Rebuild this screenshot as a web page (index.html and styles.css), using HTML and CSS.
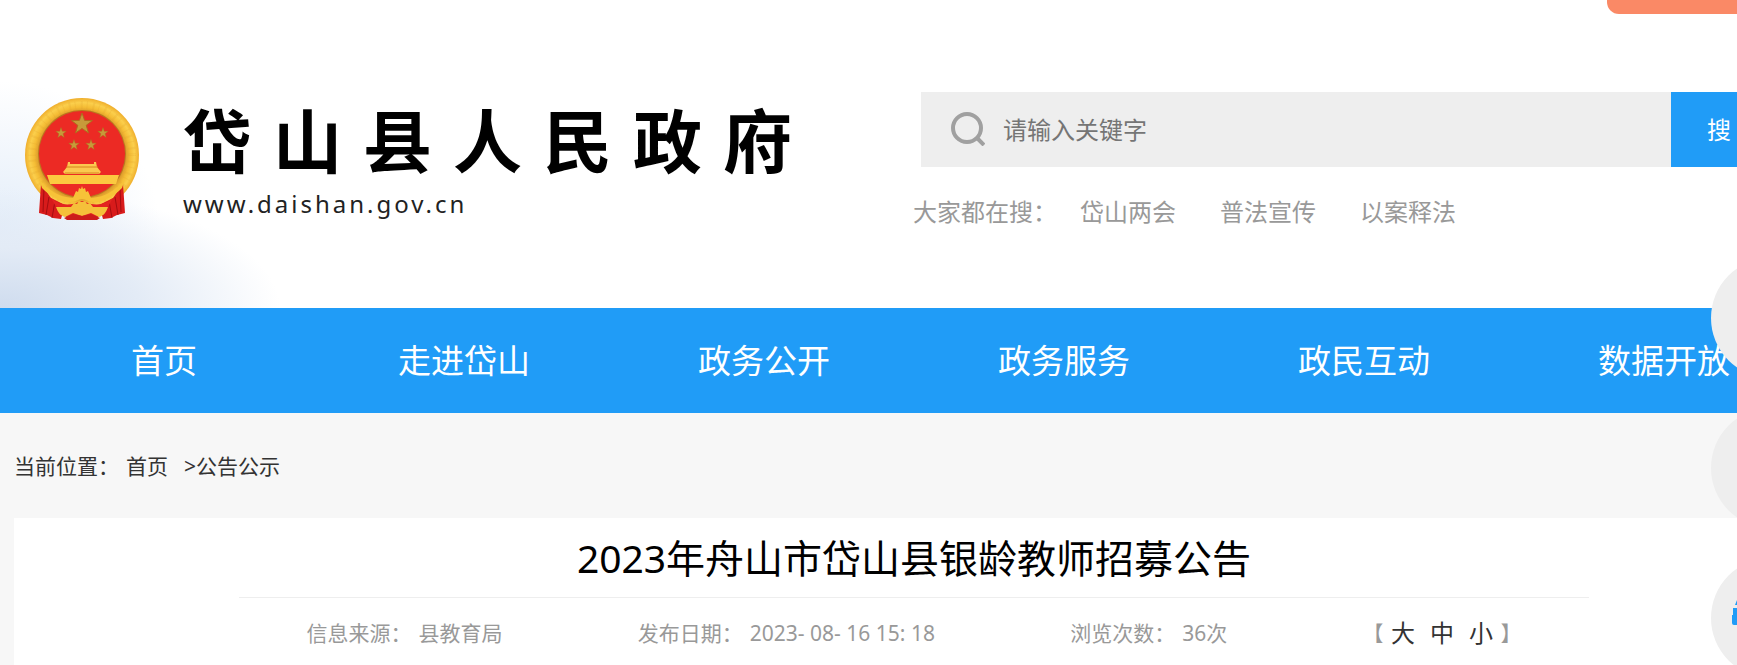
FILE: index.html
```html
<!doctype html>
<html lang="zh-CN">
<head>
	<meta charset="UTF-8">
	<meta name="viewport" content="width=device-width, initial-scale=1">
	<title>2023年舟山市岱山县银龄教师招募公告</title>
	<link rel="stylesheet" href="styles.css">
</head>
<body>
	<div class="header">
		<a href="#" class="topTab" aria-label="无障碍"></a>
		<div class="wrap head">
			<a href="#" class="logo">
				<svg class="emblem" viewBox="0 0 116 124" aria-hidden="true">
					<defs>
						<radialGradient id="gold" cx="50%" cy="50%" r="50%">
							<stop offset=".76" stop-color="#d9982a"/>
							<stop offset=".84" stop-color="#f5bd35"/>
							<stop offset=".92" stop-color="#fbcf4c"/>
							<stop offset="1" stop-color="#efae2c"/>
						</radialGradient>
						<path id="star" d="M0-10L2.4-3.2 9.5-3.1 3.8 1.2 5.9 8.1 0 4-5.9 8.1-3.8 1.2-9.5-3.1-2.4-3.2z"/>
					</defs>
					<circle cx="58" cy="58" r="57" fill="url(#gold)"/>
					<circle cx="58" cy="58" r="50" fill="none" stroke="#d9932a" stroke-width="8" stroke-dasharray="1 5 2 4" opacity=".15"/>
					<circle cx="58" cy="57" r="44" fill="#b9771f"/>
					<circle cx="58" cy="57" r="43" fill="#ec2a24"/>
					<g fill="#c79a3a" stroke="#a8701c" stroke-width=".8">
						<use href="#star" transform="translate(58 27) scale(1.1)"/>
						<use href="#star" transform="translate(37 36) scale(.55)"/>
						<use href="#star" transform="translate(79 36) scale(.55)"/>
						<use href="#star" transform="translate(50 48) scale(.55)"/>
						<use href="#star" transform="translate(67 48) scale(.55)"/>
					</g>
					<path d="M44 65h2v2h24v-2h2l1 5 4 5-2 2H41l-2-2 4-5z" fill="#fbc94f"/>
					<path d="M42 70h32M41 76h34" stroke="#d9821e"/>
					<path d="M23 78h72l-3 9H26z" fill="#fcc940"/>
					<!-- 下方红绸 -->
					<path d="M17 87l10 14 14 7-4 14-8-1-6-3-8-2zM99 87L89 101l-14 7 4 14 8-1 6-3 8-2z" fill="#d81b1b"/>
					<path d="M20 92l-1 23M25 100l-3 18M31 104l-3 17M96 92l1 23M91 100l3 18M85 104l3 17" stroke="#a30d10"/>
					<path d="M27 101c8 7 18 9 30 3l2 0c12 6 22 4 30-3l-4 7-11 12H42l-11-12z" fill="#e32420"/>
					<path d="M15 82c9 11 19 18 34 19l3-7 2 1 1-4 2 1 1-3 1 3 2-1 1 4 2-1 3 7c15-1 25-8 34-19l-3 9c-8 8-18 14-29 14-5 0-7-3-11-3s-6 3-11 3c-11 0-21-6-29-14z" fill="#f7c238"/>
					<path d="M32 110h15l3-4 3 1 2-3 3 1 3-1 2 3 3-1 3 4h15c-2 6-5 9-9 10l-8-4-9 3-9-3-8 4c-4-1-7-4-9-10z" fill="#f5c03a"/>
					<path d="M40 121l9-4 9 2 9-2 9 4-3 2H43z" fill="#cc1c1b"/>
				</svg>
				<span class="logoText">
					<strong>岱山县人民政府</strong>
					<em>www.daishan.gov.cn</em>
				</span>
			</a>
			<div class="search">
				<form class="searchBox" action="#">
					<label for="keyword" aria-label="关键字">
						<svg viewBox="0 0 34 34" aria-hidden="true"><circle cx="16" cy="16" r="14"/><path d="M26 26l7 7"/></svg>
					</label>
					<input type="text" id="keyword" placeholder="请输入关键字">
					<button type="submit">搜 索</button>
				</form>
				<div class="hot">
					<span>大家都在搜：</span>
					<a href="#">岱山两会</a>
					<a href="#">普法宣传</a>
					<a href="#">以案释法</a>
				</div>
			</div>
		</div>
	</div>
	<div class="nav">
		<ul class="wrap">
			<li><a href="#">首页</a></li>
			<li><a href="#">走进岱山</a></li>
			<li><a href="#">政务公开</a></li>
			<li><a href="#">政务服务</a></li>
			<li><a href="#">政民互动</a></li>
			<li><a href="#">数据开放</a></li>
		</ul>
	</div>
	<div class="wrap crumb">
		<span>当前位置：</span>
		<a href="#">首页</a>
		<span>&gt;<a href="#">公告公示</a></span>
	</div>
	<div class="wrap article">
		<h1>2023年舟山市岱山县银龄教师招募公告</h1>
		<div class="info">
			<p><span>信息来源：</span><span>县教育局</span></p>
			<p><span>发布日期：</span><span>2023- 08- 16 15: 18</span></p>
			<p><span>浏览次数：</span><span>36次</span></p>
			<p class="size">【<button type="button">大</button><button type="button">中</button><button type="button">小</button>】</p>
		</div>
	</div>
	<div class="side">
		<a href="#" aria-label="微信"></a>
		<a href="#" aria-label="微博"></a>
		<a href="#" aria-label="智能问答">
			<svg viewBox="0 0 78 60" aria-hidden="true">
				<path d="M3 17l2-5h68l2 5z"/>
				<path d="M1 20h76v7h1v8q0 2-2 2H2q-2 0-2-2v-8h1z"/>
			</svg>
		</a>
	</div>
</body>
</html>
```

FILE: styles.css
```css
* { margin: 0; padding: 0; box-sizing: border-box;}
body { display: flex; flex-direction: column; min-height: 100vh; font-size: 21px; line-height: 30px; font-family: "Noto Sans", "Noto Sans CJK SC", sans-serif; color: #333; background: #f7f7f7; overflow-x: hidden;}
a { text-decoration: none; color: inherit;}
ul { list-style: none;}
button, input { font: inherit; border: none; background: none;}
button { cursor: pointer;}
svg { display: block;}
/* 版心向右超出窗口 */
.wrap { margin: 0 -77px 0 14px;}

.header { position: relative; background: radial-gradient(ellipse 280px 120px at 0 100%, #cfdcee 0, #e3ebf6 50%, rgba(255,255,255,0) 100%), radial-gradient(ellipse 160px 150px at 0 75%, #e3edf9 0, rgba(255,255,255,0) 100%), #fff;}
.topTab { position: absolute; top: 0; right: 0; width: 130px; height: 14px; background: #fa8966; border-radius: 0 0 0 12px;}
.head { display: flex; justify-content: space-between; padding: 92px 17px 78px 10px;}
.logo { display: flex; align-items: flex-start; gap: 43px; color: #000; padding-top: 5px;}
.emblem { width: 116px; height: 124px;}
.logoText { display: flex; flex-direction: column; gap: 6px; padding-top: 2px;}
.logoText strong { font-size: 69px; line-height: 84px; letter-spacing: 21px;}
.logoText em { font-size: 24px; line-height: 30px; font-style: normal; letter-spacing: 3px; color: #222;}
.search { width: 876px;}
.searchBox { display: flex; height: 75px; font-size: 24px;}
.searchBox label { padding: 20px 18px 0 30px; background: #eee;}
.searchBox label svg { width: 34px; height: 34px; fill: none; stroke: #a0a0a0; stroke-width: 4;}
.searchBox input { flex: 1; min-width: 0; background: #eee; outline: none; color: #333;}
.searchBox input::placeholder { color: #757575; opacity: 1;}
.searchBox button { width: 126px; background: #209cf7; color: #fff;}
.hot { display: flex; gap: 44px; margin: 27px 0 0 -8px; font-size: 24px; line-height: 36px; color: #999;}
.hot span { margin-right: -21px;}

.nav { background: #209cf7;}
.nav ul { display: flex;}
.nav li { flex: 1; text-align: center; font-size: 33px; line-height: 105px; color: #fff;}
.nav a { display: block;}

.crumb { display: flex; gap: 16px; padding: 38px 0 37px;}
.crumb span:first-child { margin-right: -9px;}

.article { flex: 1; background: #fff;}
.article h1 { width: 75%; margin: 0 auto; padding: 11px 0 10px; font-size: 39px; line-height: 58px; font-weight: normal; text-align: center; color: #000; border-bottom: 1px solid #eee;}
.info { width: 75%; margin: 0 auto; padding-top: 20px; display: flex; justify-content: space-around; color: #999;}
.info p { display: flex; gap: 7px;}
.info .size { gap: 0;}
.size button { width: 39px; font-size: 24px; color: #333;}

.side { position: fixed; right: -94px; top: 258px; display: flex; flex-direction: column; gap: 30px;}
.side a { display: flex; align-items: center; justify-content: center; width: 120px; height: 120px; border-radius: 50%; background: #eee;}
.side svg { width: 78px; height: 60px; fill: #209cf7;}
```
